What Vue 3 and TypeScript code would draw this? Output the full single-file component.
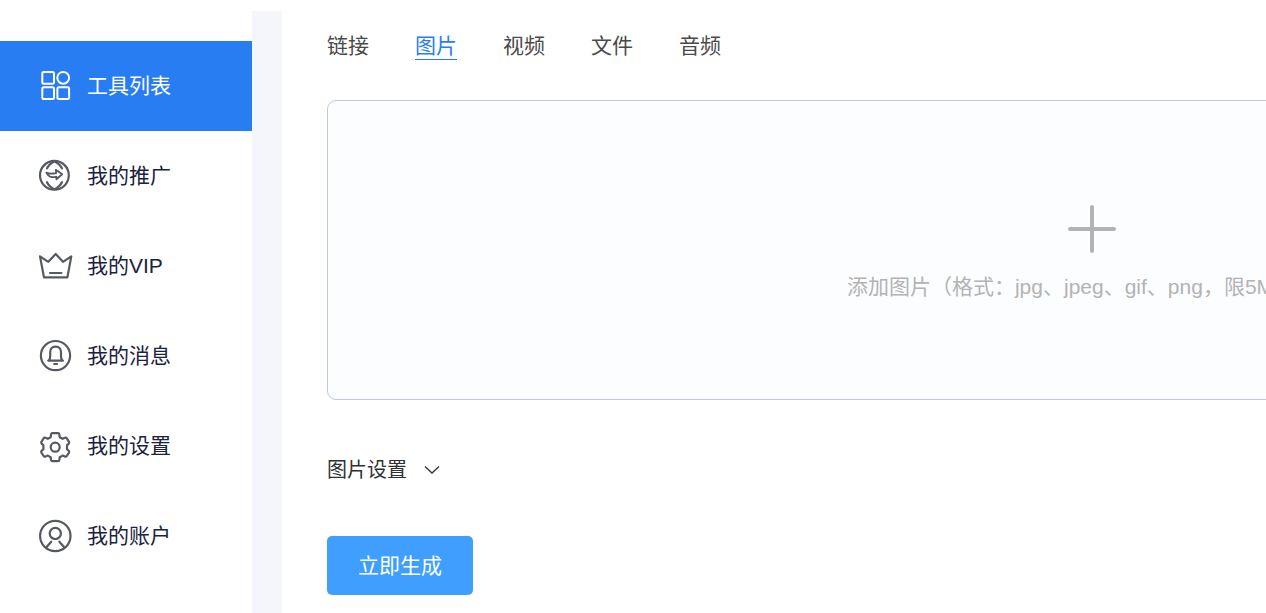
<script setup lang="ts">
import { ref } from 'vue'

interface MenuItem {
  id: string
  label: string
}

const menu: MenuItem[] = [
  { id: 'tools', label: '工具列表' },
  { id: 'promo', label: '我的推广' },
  { id: 'vip', label: '我的VIP' },
  { id: 'message', label: '我的消息' },
  { id: 'settings', label: '我的设置' },
  { id: 'account', label: '我的账户' },
]
const tabs: string[] = ['链接', '图片', '视频', '文件', '音频']

const activeMenu = ref('tools')
const activeTab = ref('图片')
</script>

<template>
  <div class="page">
    <nav class="sidebar">
      <a
        v-for="item in menu"
        :key="item.id"
        href="#"
        class="menu-item"
        :class="{ active: item.id === activeMenu }"
        @click.prevent="activeMenu = item.id"
      >
        <svg class="menu-icon" viewBox="0 0 36 36" aria-hidden="true">
          <g v-if="item.id === 'tools'">
            <rect x="5.3" y="4" width="11.7" height="11.7" rx="1.5" />
            <circle cx="26.2" cy="9.8" r="5.9" />
            <rect x="5.3" y="19.3" width="11.7" height="11.7" rx="1.5" />
            <rect x="20.4" y="19.3" width="11.7" height="11.7" rx="1.5" />
          </g>
          <g v-else-if="item.id === 'promo'">
            <circle cx="17.4" cy="17.3" r="14.4" />
            <path d="M17.4 3.2C14 5 11.4 7.4 10 10.4M17.4 3.2C20.8 5 23.6 7.4 25 10.4M10 24.2C11.4 27.2 14 29.6 17.4 31.4C20.8 29.6 23.6 27.2 25 24.2" />
            <path d="M9.4 14.6C12 16 15 16 19.2 15.2L18.8 11.8L25.2 16.2L19.4 21.2V18.6C15 20 11 18.4 9.4 14.6Z" stroke-width="1.8" />
          </g>
          <g v-else-if="item.id === 'vip'">
            <path d="M3 8.4L11.3 13.8L18.7 6L26 13.8L34.3 8.4L30.4 29.4H7Z" />
            <path d="M13 25H24.4" />
          </g>
          <g v-else-if="item.id === 'message'">
            <circle cx="18.5" cy="17.6" r="14.6" />
            <path d="M11.2 22.6H26M12 22.2C13 21 13.2 19.6 13.2 18V14C13.2 10.8 15.4 8.6 18.6 8.6S24 10.8 24 14V18C24 19.6 24.2 21 25.2 22.2M17.2 26H20" />
          </g>
          <g v-else-if="item.id === 'settings'">
            <path d="M15.4 5.2H21Q22.2 5.2 22.4 6.6L22.7 9.2L25.6 10.8L28 9.8Q29.2 9.4 29.8 10.4L32 13.8Q32.6 15 31.6 15.8L30 17.2V21.2L31.6 22.6Q32.6 23.4 32 24.6L29.8 28Q29.2 29 28 28.6L25.6 27.6L22.7 29.2L22.4 31.8Q22.2 33.2 21 33.2H15.4Q14.2 33.2 14 31.8L13.7 29.2L10.8 27.6L8.4 28.6Q7.2 29 6.6 28L4.4 24.6Q3.8 23.4 4.8 22.6L6.4 21.2V17.2L4.8 15.8Q3.8 15 4.4 13.8L6.6 10.4Q7.2 9.4 8.4 9.8L10.8 10.8L13.7 9.2L14 6.6Q14.2 5.2 15.4 5.2Z" />
            <circle cx="18.2" cy="19.2" r="4.5" />
          </g>
          <g v-else>
            <circle cx="18.3" cy="18" r="15.2" />
            <circle cx="18.3" cy="15.4" r="5.6" />
            <path d="M14.2 23.7L9.2 29.4M22.4 23.7L27.4 29.4" />
          </g>
        </svg>
        <span>{{ item.label }}</span>
      </a>
    </nav>

    <main class="content">
      <div class="tabs" role="tablist">
        <button
          v-for="tab in tabs"
          :key="tab"
          type="button"
          role="tab"
          class="tab"
          :class="{ active: tab === activeTab }"
          :aria-selected="tab === activeTab"
          @click="activeTab = tab"
        >
          {{ tab }}
        </button>
      </div>

      <button type="button" class="upload">
        <svg class="plus" viewBox="0 0 50 50" aria-hidden="true">
          <path d="M25 3V47M3 25H47" />
        </svg>
        <span>添加图片（格式：jpg、jpeg、gif、png，限5M以内）</span>
      </button>

      <button type="button" class="options">
        <span>图片设置</span>
        <svg class="chevron" viewBox="0 0 16 10" aria-hidden="true">
          <path d="M1 1.5L8 8L15 1.5" />
        </svg>
      </button>

      <button type="button" class="generate">立即生成</button>
    </main>
  </div>
</template>

<style>
body {
  margin: 0;
  background: #fff;
}
</style>

<style scoped>
.page {
  display: flex;
  box-sizing: border-box;
  min-height: 100vh;
  padding-top: 11px;
  overflow: hidden;
  font-family: "Liberation Sans", "Noto Sans CJK SC", sans-serif;
  font-size: 21px;
  line-height: 30px;
}

button {
  padding: 0;
  border: 0;
  background: none;
  font: inherit;
  cursor: pointer;
}

.sidebar {
  flex: 0 0 252px;
  padding-top: 30px;
}

.menu-item {
  display: flex;
  align-items: center;
  gap: 14px;
  height: 90px;
  padding-left: 37px;
  color: #1a2240;
  text-decoration: none;
}

.menu-icon {
  width: 36px;
  height: 36px;
  fill: none;
  stroke: #555961;
  stroke-width: 2.2;
  stroke-linecap: round;
  stroke-linejoin: round;
}

.menu-item.active {
  background: #287df2;
  color: #fff;
}

.menu-item.active .menu-icon {
  stroke: #fff;
  stroke-width: 2;
}

.content {
  display: flex;
  flex: 1 0 auto;
  flex-direction: column;
  align-items: flex-start;
  padding: 22px 45px 18px;
  border-left: 30px solid #f4f6fc;
}

.tabs {
  display: flex;
  gap: 46px;
  margin-bottom: 40px;
}

.tab {
  height: 27px;
  border-bottom: 1px solid transparent;
  color: #4a4a4a;
  line-height: 26px;
}

.tab.active {
  border-bottom: 1px solid #287df2;
  color: #287df2;
}

.upload {
  display: flex;
  flex-direction: column;
  align-items: center;
  justify-content: center;
  gap: 18px;
  box-sizing: border-box;
  width: 100%;
  min-width: 1530px;
  height: 300px;
  padding-top: 6px;
  border: 1px solid #c0c8da;
  border-radius: 9px;
  background: #fcfdff;
  color: #b3b3b3;
}

.plus {
  width: 50px;
  height: 50px;
  fill: none;
  stroke: #b3b3b3;
  stroke-width: 4;
  stroke-linecap: round;
}

.options {
  display: flex;
  align-items: center;
  gap: 17px;
  margin: 55px 0 51px;
  color: #303133;
  font-size: 20px;
}

.chevron {
  width: 16px;
  height: 10px;
  fill: none;
  stroke: #303133;
  stroke-width: 1.3;
}

.generate {
  height: 59px;
  padding: 0 31px;
  border-radius: 5px;
  background: #409eff;
  color: #fff;
}
</style>
